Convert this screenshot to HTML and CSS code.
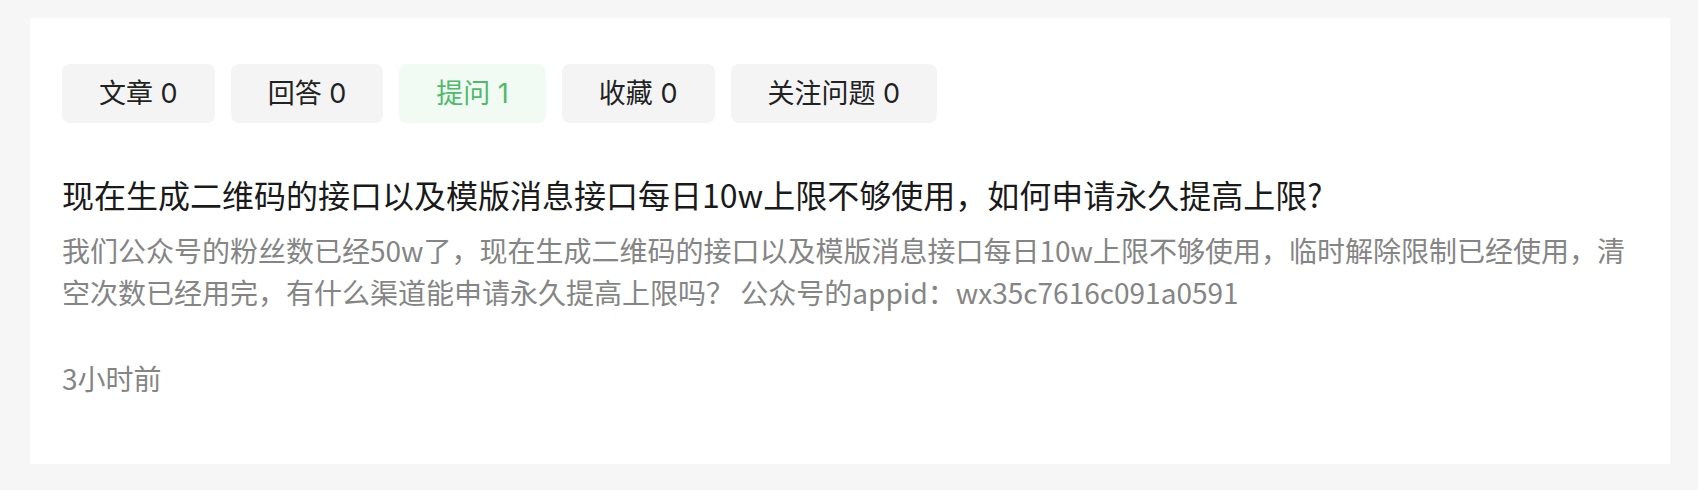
FILE: index.html
```html
<!DOCTYPE html>
<html lang="zh-CN">
<head>
  <meta charset="UTF-8" />
  <meta name="viewport" content="width=device-width, initial-scale=1.0"/>
  <title>我的提问</title>
  <link rel="stylesheet" href="styles.css">
</head>
<body>
  <div class="card">
    <div class="tabs">
      <div class="tab">文章 0</div>
      <div class="tab">回答 0</div>
      <div class="tab active">提问 1</div>
      <div class="tab">收藏 0</div>
      <div class="tab">关注问题 0</div>
    </div>

    <div class="post">
      <h3 class="post-title">现在生成二维码的接口以及模版消息接口每日10w上限不够使用，如何申请永久提高上限?</h3>
      <p class="post-desc">我们公众号的粉丝数已经50w了，现在生成二维码的接口以及模版消息接口每日10w上限不够使用，临时解除限制已经使用，清空次数已经用完，有什么渠道能申请永久提高上限吗？ 公众号的appid：wx35c7616c091a0591</p>
      <div class="post-time">3小时前</div>
    </div>
  </div>
</body>
</html>
```

FILE: styles.css
```css
body {
  margin: 0;
  padding: 18px 28px 26px 30px;
  background-color: #f6f6f6;
  font-family: "Noto Sans CJK SC", "Noto Sans", sans-serif;
  color: #1a1a1a;
}
.card {
  background: #fff;
  padding: 46px 32px 65px 32px;
}
.tabs {
  display: flex;
  gap: 16px;
}
.tab {
  height: 59px;
  line-height: 59px;
  padding: 0 37px;
  border-radius: 8px;
  background: #f4f4f4;
  font-family: Inter, "Noto Sans CJK SC", sans-serif;
  font-size: 27px;
  color: #222;
}
.tab.active {
  background: #f2faf4;
  color: #4fba6a;
}
.post-title {
  margin: 49px 0 0;
  font-size: 32px;
  font-weight: normal;
  line-height: 45px;
  color: #1a1a1a;
}
.post-desc {
  margin: 12px 0 0;
  font-size: 28px;
  line-height: 42px;
  color: #858585;
}
.post-time {
  margin-top: 44px;
  font-size: 28px;
  line-height: 42px;
  color: #858585;
}
```
